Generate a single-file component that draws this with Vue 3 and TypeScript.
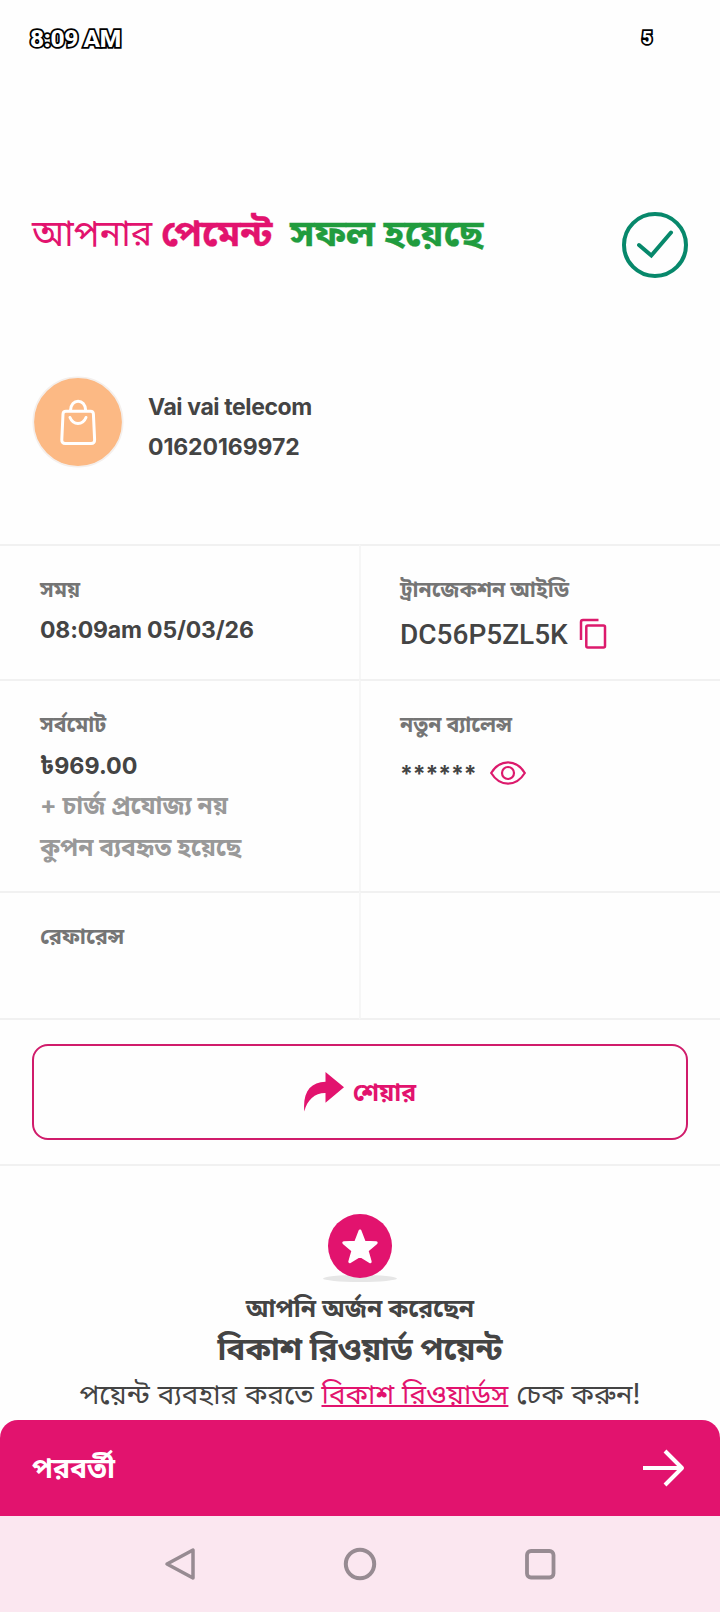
<script setup lang="ts">
interface Key { name: string }
const keys: Key[] = [{ name: 'back' }, { name: 'home' }, { name: 'recent' }]
const mask = '******'
</script>

<template>
  <div class="screen">
    <header class="status">
      <span class="clock">8:09 AM</span>
      <span class="battery">5</span>
    </header>

    <section class="result">
      <h1 class="title">
        <span class="t-light">আপনার</span><span class="t-bold">পেমেন্ট</span><span class="t-ok">সফল হয়েছে</span>
      </h1>
      <svg class="check" viewBox="0 0 66 66" fill="none" stroke="#07886b">
        <circle cx="33" cy="33" r="31" stroke-width="4" />
        <path d="M17 33 29.3 43.5 49 20.5" stroke-width="4" stroke-linecap="round" />
      </svg>
    </section>

    <section class="merchant">
      <svg class="avatar" viewBox="0 0 92 92" fill="none">
        <circle cx="46" cy="46" r="44.7" fill="#fcb984" stroke="#f4efec" stroke-width="1.6" />
        <g stroke="#fff" stroke-width="3" stroke-linecap="round" stroke-linejoin="round">
          <path d="M34 35.300h24.500q2.700 0 2.900 2.700l1.200 25.500q0.200 4-3.500 4H33.300q-3.700 0-3.500-4L31 38q0.200-2.700 3-2.700z" />
          <path d="M38.500 34.500c.2-12.500 15-12.500 15.200 0M38 41.500q2.500 6 8 6t8-6" />
        </g>
      </svg>
      <div class="who">
        <span class="l-name">Vai vai telecom</span>
        <span class="l-phone">01620169972</span>
      </div>
    </section>

    <section class="grid">
      <div class="cell r1">
        <p class="label"><span>সময়</span></p>
        <p class="value"><span class="l-date">08:09am 05/03/26</span></p>
      </div>
      <div class="cell r1 right">
        <p class="label"><span>ট্রানজেকশন আইডি</span></p>
        <p class="value trx">
          <span class="l-trx">DC56P5ZL5K</span>
          <svg class="copy" viewBox="0 0 28 32" fill="none" stroke="#dc1a6c" stroke-width="2.500">
            <path d="M2 22V4q0-2 2-2h15.500" />
            <rect x="7.300" y="7.500" width="18.700" height="22" rx="1.500" />
          </svg>
        </p>
      </div>
      <div class="cell r2">
        <p class="label"><span>সর্বমোট</span></p>
        <p class="value"><span class="l-total">৳969.00</span></p>
        <p class="note"><span class="l-charge">+ চার্জ প্রযোজ্য নয়</span></p>
        <p class="note"><span>কুপন ব্যবহৃত হয়েছে</span></p>
      </div>
      <div class="cell r2 right">
        <p class="label"><span>নতুন ব্যালেন্স</span></p>
        <p class="value balance">
          <span class="l-mask">{{ mask }}</span>
          <svg class="eye" viewBox="0 0 36 24" fill="none" stroke="#dc1a6c" stroke-width="2.200">
            <path d="M1.200 12C5.500 5 11 1.400 18 1.400S30.500 5 34.800 12C30.500 19 25 22.600 18 22.600S5.500 19 1.200 12z" />
            <circle cx="18" cy="12" r="6" />
          </svg>
        </p>
      </div>
      <div class="cell r3">
        <p class="label"><span class="l-ref">রেফারেন্স</span></p>
      </div>
      <div class="cell r3 right"></div>
    </section>

    <section class="actions">
      <button class="share" type="button">
        <svg class="arrow" viewBox="0 0 40 40"><path fill="#e2136e" d="M.3 39.500C-1.500 20 6.500 10 21.500 9.700V0L40 15.300 21.500 30.700V21C11 20.800 3 28 .3 39.500z" /></svg>
        <span class="l-share">শেয়ার</span>
      </button>
    </section>

    <section class="reward">
      <svg class="badge" viewBox="0 0 74 70">
        <ellipse cx="37" cy="64.500" rx="37" ry="3.500" fill="#e6e6e6" />
        <circle cx="37" cy="32" r="32" fill="#e2136e" />
        <path fill="#fff" stroke="#fff" stroke-width="3" stroke-linejoin="round" d="M37 17 41.300 28.300 53.200 28.800 44 36.500 47.200 47.700 37 41.500 26.800 47.700 30 36.500 20.800 28.800 32.700 28.300z" />
      </svg>
      <p class="earned"><span>আপনি অর্জন করেছেন</span></p>
      <p class="points"><span>বিকাশ রিওয়ার্ড পয়েন্ট</span></p>
      <p class="hint"><span>পয়েন্ট ব্যবহার করতে <a>বিকাশ রিওয়ার্ডস</a> চেক করুন!</span></p>
    </section>

    <footer class="next">
      <span class="l-next">পরবর্তী</span>
      <svg class="go" viewBox="0 0 42 38" fill="none" stroke="#fff" stroke-width="4" stroke-linejoin="round"><path d="M0 19H39M22 2 39 19 22 36" /></svg>
    </footer>

    <nav class="nav">
      <span v-for="k in keys" :key="k.name" class="key">
        <svg viewBox="0 0 34 34" fill="none" stroke="#978b92" stroke-width="4" stroke-linejoin="round">
          <path v-if="k.name === 'back'" d="M30 3V31L4 17z" stroke-width="3.500" />
          <circle v-else-if="k.name === 'home'" cx="17" cy="17" r="14.200" />
          <rect v-else x="4" y="4" width="26.500" height="26.500" rx="4" stroke-width="3.800" />
        </svg>
      </span>
    </nav>
  </div>
</template>

<style>
body { margin: 0; background: #fefefe; }
</style>

<style scoped>
.screen {
  width: 720px; height: 1612px; overflow: hidden; display: flex; flex-direction: column;
  background: #fefefe; color: #444; font-family: Inter, "Noto Sans Bengali", "Noto Sans", sans-serif;
}
p, h1 { margin: 0; font-weight: inherit; }
span { white-space: pre; }
.status {
  height: 76px; display: flex; justify-content: space-between; align-items: center;
  padding: 0 68px 0 30px; box-sizing: border-box;
  font-family: Roboto, sans-serif; color: #fff; font-weight: 800;
  -webkit-text-stroke: 3.600px #000; paint-order: stroke fill;
}
.clock { font-size: 24.500px; letter-spacing: -.4px; }
.battery { font-size: 17.500px; }
.result { height: 300px; display: flex; justify-content: space-between; padding: 133px 32px 0; box-sizing: border-box; }
.title { display: flex; font-size: 36px; line-height: 48px; color: #e2136e; }
.t-bold, .t-ok { font-weight: 700; transform-origin: left center; -webkit-text-stroke: .3px currentColor; }
.t-bold { margin-left: 9px; transform: scaleX(1.04); }
.t-ok { margin-left: 21.500px; color: #219c3e; transform: scaleX(1.058); }
.check { width: 66px; height: 66px; margin-top: 3px; flex: none; }
.merchant { height: 168px; display: flex; padding-left: 32px; gap: 24px; }
.avatar { width: 92px; height: 92px; }
.who { display: flex; flex-direction: column; padding-top: 11px; font-weight: 700; font-size: 23px; line-height: 40px; }
.l-name { letter-spacing: -.4px; }
.l-phone { letter-spacing: -.08px; }
.l-date { letter-spacing: -.16px; }
.grid { display: grid; grid-template-columns: 359px 361px; grid-template-rows: 135px 212px 129px; }
.cell { border-top: 2px solid #f1f1f1; padding: 23px 0 0 40px; box-sizing: border-box; }
.right { border-left: 2px solid #f6f6f6; padding-left: 39px; }
.r3 { border-bottom: 2px solid #f1f1f1; }
.label { font-size: 21.300px; line-height: 41px; font-weight: 700; color: #757575; }
.l-ref { font-size: 21.800px; }
.value { font-size: 23px; line-height: 40px; font-weight: 700; }
.r2 .value { padding-top: 1px; }
.l-total { font-size: 23.300px; }
.note { font-size: 24.600px; line-height: 42px; height: 42px; font-weight: 700; color: #999; position: relative; top: -2px; }
.trx.value { display: flex; align-items: center; gap: 11px; font-family: Roboto, sans-serif; font-weight: 500; font-size: 28px; padding-top: 5px; }
.copy { width: 28px; height: 32px; margin-top: -2px; }
.balance.value { display: flex; align-items: center; gap: 14px; padding-top: 7px; }
.l-mask { letter-spacing: -.12px; padding-top: 2px; }
.eye { width: 36px; height: 24px; }
.actions { height: 146px; display: flex; padding: 24px 32px 24px; box-sizing: border-box; border-bottom: 2px solid #f1f1f1; }
.share {
  flex: 1; display: flex; align-items: center; justify-content: center; gap: 9px;
  background: none; border: 2px solid #d01c6b; border-radius: 16px; color: #e2136e; font: 700 24.800px Inter, "Noto Sans Bengali", sans-serif;
}
.l-share { padding-top: 4px; }
.arrow { width: 40px; height: 40px; }
.reward { flex: 1; display: flex; flex-direction: column; align-items: center; padding-top: 48px; }
.badge { width: 74px; height: 70px; }
.earned { font-weight: 700; font-size: 24.700px; line-height: 40px; padding-top: 4px; }
.points { font-weight: 700; font-size: 31.500px; line-height: 42px; }
.hint { font-size: 27.800px; line-height: 42px; padding-top: 3px; }
.hint a { color: #e2136e; text-decoration: underline 1.500px; text-underline-offset: 1px; text-decoration-skip-ink: none; }
.next {
  height: 96px; flex: none; display: flex; align-items: center; justify-content: space-between; padding: 0 35px 0 32px; box-sizing: border-box;
  background: #e2136e; color: #fff; border-radius: 18px 18px 0 0; font-weight: 700; font-size: 28.300px;
}
.l-next { padding-top: 5px; }
.go { width: 42px; height: 38px; }
.nav { height: 96px; flex: none; display: flex; justify-content: center; gap: 146px; align-items: center; background: #fbe7f0; }
.key { width: 34px; height: 34px; }
.key svg { display: block; width: 34px; height: 34px; }
</style>
